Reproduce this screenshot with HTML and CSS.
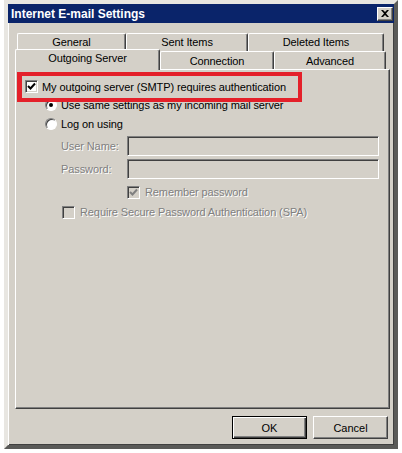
FILE: index.html
```html
<!DOCTYPE html>
<html lang="en">
<head>
    <meta charset="UTF-8">
    <title>Internet E-mail Settings</title>
    <link rel="stylesheet" href="styles.css">
</head>
<body>
    <div class="window">
        <div class="titlebar">
            <span class="title">Internet E-mail Settings</span>
            <span class="close-btn">
                <svg width="8" height="7" viewBox="0 0 8 7"><path d="M0 0h2l2 2 2-2h2L5 3.5 8 7H6L4 5 2 7H0l3-3.5z" fill="#000"/></svg>
            </span>
        </div>

        <div class="dialog-body">
            <div class="tabs">
                <div class="tab-row tab-row-back">
                    <div class="tab tab-general">General</div>
                    <div class="tab tab-sent">Sent Items</div>
                    <div class="tab tab-deleted">Deleted Items</div>
                </div>
                <div class="tab-row tab-row-front">
                    <div class="tab tab-outgoing active">Outgoing Server</div>
                    <div class="tab tab-connection">Connection</div>
                    <div class="tab tab-advanced">Advanced</div>
                </div>
            </div>

            <div class="panel">
                <div class="auth-box">
                    <span class="checkbox checked">
                        <svg width="9" height="9" viewBox="0 0 9 9"><path d="M1 4l2.5 2.5L8 1.5" fill="none" stroke="#000" stroke-width="2"/></svg>
                    </span>
                    My outgoing server (SMTP) requires authentication
                </div>

                <div class="option option-first">
                    <span class="radio on"></span>
                    Use same settings as my incoming mail server
                </div>
                <div class="option">
                    <span class="radio"></span>
                    Log on using
                </div>

                <div class="field">
                    <span class="field-label disabled">User Name:</span>
                    <span class="textbox"></span>
                </div>
                <div class="field">
                    <span class="field-label disabled">Password:</span>
                    <span class="textbox"></span>
                </div>

                <div class="check-row remember">
                    <span class="checkbox dim checked">
                        <svg width="9" height="9" viewBox="0 0 9 9"><path d="M1 4l2.5 2.5L8 1.5" fill="none" stroke="#808080" stroke-width="2"/></svg>
                    </span>
                    <span class="disabled">Remember password</span>
                </div>
                <div class="check-row spa">
                    <span class="checkbox dim"></span>
                    <span class="disabled">Require Secure Password Authentication (SPA)</span>
                </div>
            </div>

            <div class="buttons">
                <button class="btn btn-default">OK</button>
                <button class="btn">Cancel</button>
            </div>
        </div>
    </div>
</body>
</html>
```

FILE: styles.css
```css
:root {
    --face: #d4d0c8;
    --shadow: #808080;
    --dark: #404040;
    --title: #0a246a;
    --marker: #e4202a;
}

body {
    margin: 0;
    padding: 0;
    background-color: #fff;
    font-family: 'Liberation Sans', Arial, sans-serif;
    font-size: 11px;
    letter-spacing: -0.1px;
    color: #000;
}

.window {
    box-sizing: border-box;
    width: 394px;
    height: 449px;
    margin-left: 4px;
    background-color: var(--face);
    border: 4px solid var(--face);
    box-shadow: inset 1px 1px 0 #fff, inset -1px -1px 0 var(--dark);
    border-top-color: #e8e6e1;
    border-left-color: #e8e6e1;
    border-right-color: #5a5a58;
    border-bottom-color: #5a5a58;
}

.titlebar {
    height: 19px;
    background-color: var(--title);
    display: flex;
    align-items: center;
    justify-content: space-between;
    padding: 0 1px 0 3px;
}

.title {
    color: #fff;
    font-weight: bold;
    font-size: 12px;
    letter-spacing: 0;
}

.close-btn {
    box-sizing: border-box;
    width: 16px;
    height: 14px;
    background-color: var(--face);
    display: flex;
    align-items: center;
    justify-content: center;
    border: 1px solid;
    border-color: #fff var(--dark) var(--dark) #fff;
    box-shadow: inset -1px -1px 0 var(--shadow);
}

.dialog-body {
    padding: 10px 4px 0 7px;
}

/* tab strip */
.tab-row {
    display: flex;
    height: 18px;
}

.tab-row-back {
    padding-left: 2px;
}

.tab-row-front {
    align-items: flex-end;
    position: relative;
    z-index: 2;
}

.tab {
    box-sizing: border-box;
    height: 18px;
    border-top: 1px solid #fff;
    border-left: 1px solid #fff;
    border-right: 1px solid var(--dark);
    box-shadow: inset -1px 0 0 var(--shadow);
    border-radius: 2px 2px 0 0;
    background-color: var(--face);
    text-align: center;
    line-height: 16px;
}

.tab-general { width: 109px; }
.tab-sent { width: 122px; }
.tab-deleted { width: 136px; }
.tab-outgoing { width: 145px; }
.tab-connection { width: 114px; }
.tab-advanced { width: 112px; }

.tab-row-front .tab {
    line-height: 18px;
}

.tab.active {
    height: 21px;
    margin-bottom: -1px;
    line-height: 17px;
    position: relative;
    z-index: 3;
}

/* page */
.panel {
    box-sizing: border-box;
    height: 340px;
    border-top: 1px solid #fff;
    border-left: 1px solid #fff;
    border-right: 1px solid var(--dark);
    border-bottom: 1px solid var(--dark);
    box-shadow: inset -1px -1px 0 var(--shadow);
    padding: 2px 0 0 1px;
}

.auth-box {
    position: relative;
    z-index: 1;
    box-sizing: border-box;
    width: 285px;
    height: 30px;
    border: 4px solid var(--marker);
    border-left-width: 5px;
    display: flex;
    align-items: center;
    gap: 4px;
    padding: 0 0 1px 3px;
}

.checkbox {
    box-sizing: border-box;
    width: 13px;
    height: 13px;
    flex-shrink: 0;
    background-color: #fff;
    border: 1px solid;
    border-color: var(--shadow) #fff #fff var(--shadow);
    box-shadow: inset 1px 1px 0 var(--dark), inset -1px -1px 0 var(--face);
    display: flex;
    align-items: center;
    justify-content: center;
}

.checkbox.dim {
    background-color: var(--face);
}

.option {
    display: flex;
    align-items: center;
    gap: 4px;
    height: 18px;
    padding-left: 28px;
}

.option-first {
    margin-top: -6px;
    margin-bottom: 1px;
}

.radio {
    box-sizing: border-box;
    width: 12px;
    height: 12px;
    border-radius: 50%;
    background-color: #fff;
    border: 1px solid;
    border-color: var(--shadow) #fff #fff var(--shadow);
    box-shadow: inset 1px 1px 0 var(--dark);
    display: flex;
    align-items: center;
    justify-content: center;
}

.radio.on::after {
    content: '';
    width: 4px;
    height: 4px;
    border-radius: 50%;
    background-color: #000;
}

.field {
    display: flex;
    align-items: center;
    padding-left: 44px;
    margin-top: 3px;
}

.field:first-of-type {
    margin-top: 2px;
}

.field-label {
    width: 66px;
}

.textbox {
    box-sizing: border-box;
    width: 252px;
    height: 20px;
    background-color: var(--face);
    border: 1px solid;
    border-color: var(--shadow) #fff #fff var(--shadow);
    box-shadow: inset 1px 1px 0 var(--dark);
}

.disabled {
    color: var(--shadow);
    text-shadow: 1px 1px 0 #fff;
}

.check-row {
    display: flex;
    align-items: center;
    gap: 5px;
    height: 18px;
}

.remember {
    padding-left: 110px;
    margin-top: 4px;
}

.spa {
    padding-left: 45px;
    margin-top: 2px;
}

/* footer */
.buttons {
    display: flex;
    justify-content: flex-end;
    gap: 6px;
    padding: 7px 2px 0 0;
}

.btn {
    box-sizing: border-box;
    width: 75px;
    height: 23px;
    margin: 0;
    padding: 0;
    font-family: inherit;
    font-size: 11px;
    color: #000;
    background-color: var(--face);
    border: 1px solid;
    border-color: #fff var(--dark) var(--dark) #fff;
    box-shadow: inset -1px -1px 0 var(--shadow);
}

.btn-default {
    border: 1px solid #000;
    box-shadow: inset 1px 1px 0 #fff, inset -1px -1px 0 var(--dark), inset -2px -2px 0 var(--shadow);
}
```
